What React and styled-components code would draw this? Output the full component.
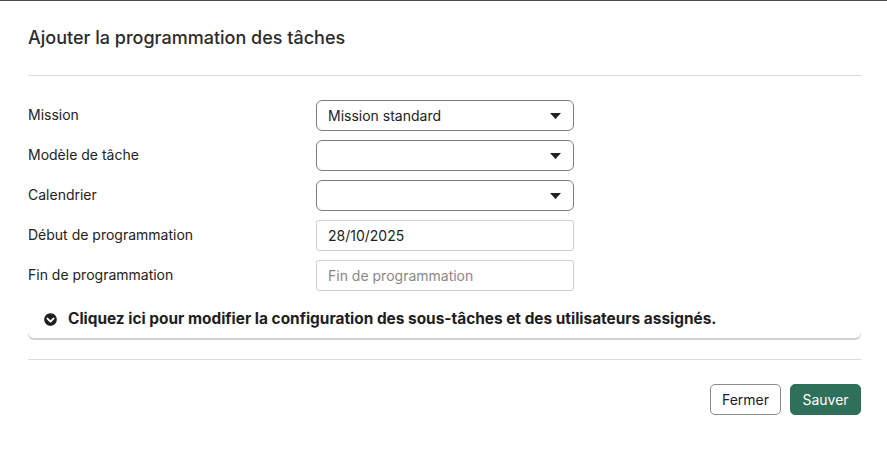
import React from 'react'
import styled, {createGlobalStyle} from 'styled-components'
import {FaChevronCircleDown} from 'react-icons/fa'

const GlobalStyle = createGlobalStyle`
body{
    margin: 0;
    background: #fff;
    font-family: Inter, "Noto Sans", "Liberation Sans", sans-serif;
    color: #222;
}
* { box-sizing: border-box; }
`;

const fields = [
    {label: 'Mission', kind: 'select', value: 'Mission standard'},
    {label: 'Modèle de tâche', kind: 'select', value: ''},
    {label: 'Calendrier', kind: 'select', value: ''},
    {label: 'Début de programmation', kind: 'input', value: '28/10/2025'},
    {label: 'Fin de programmation', kind: 'input', value: '', placeholder: 'Fin de programmation'},
]

const Caret = () => (
    <svg width="11" height="6" viewBox="0 0 11 6">
        <path d="M0 0h11L5.5 6z" fill="#222" />
    </svg>
)

const App = () => {
    return (
        <>
            <GlobalStyle />
            <TopEdge />
            <Modal>
                <Header>
                    <Title>Ajouter la programmation des tâches</Title>
                </Header>
                <Form>
                    {fields.map(f => (
                        <Row key={f.label}>
                            <Label>{f.label}</Label>
                            {f.kind === 'select' ?
                                <Select>
                                    <span>{f.value}</span>
                                    <Caret />
                                </Select>
                                :
                                <Input readOnly value={f.value} placeholder={f.placeholder} />
                            }
                        </Row>
                    ))}
                </Form>
                <Card>
                    <CardToggle>
                        <FaChevronCircleDown size={13} />
                        Cliquez ici pour modifier la configuration des sous-tâches et des utilisateurs assignés.
                    </CardToggle>
                </Card>
                <Footer>
                    <Button>Fermer</Button>
                    <Button primary>Sauver</Button>
                </Footer>
            </Modal>
        </>
    )
}

export default App

const TopEdge = styled.div`
height: 1px;
background: #4a4a4a;
`;

const Modal = styled.div`
padding: 0 26px 0 28px;
`;

const Header = styled.div`
padding-top: 26px;
height: 75px;
border-bottom: 1px solid #dcdcdc;
`;

const Title = styled.h1`
margin: 0;
font-size: 18px;
line-height: 22px;
font-weight: 500;
color: #2b2b2b;
`;

const Form = styled.div`
display: flex;
flex-direction: column;
gap: 9px;
padding-top: 24px;
`;

const Row = styled.div`
display: grid;
grid-template-columns: 288px 258px;
align-items: center;
height: 31px;
`;

const Label = styled.label`
font-size: 14px;
line-height: 17px;
color: #222;
margin-top: -3px;
`;

const Select = styled.div`
height: 31px;
display: flex;
align-items: center;
justify-content: space-between;
padding: 0 12px 0 11px;
border: 1px solid #7d7d7d;
border-radius: 6px;
font-size: 14px;
color: #222;
`;

const Input = styled.input`
height: 31px;
width: 100%;
padding: 0 11px;
border: 1px solid #cfcfcf;
border-radius: 3px;
font-family: inherit;
font-size: 14px;
color: #222;
outline: none;
&::placeholder{
    color: #888;
}
`;

const Card = styled.div`
margin-top: 9px;
border-radius: 6px;
box-shadow: 0 2px 0 0 #d0d0d0;
padding: 9px 16px 9px;
`;

const CardToggle = styled.div`
display: flex;
align-items: center;
gap: 11px;
font-size: 15.4px;
line-height: 20px;
font-weight: 700;
color: #1e1e1e;
cursor: pointer;
`;

const Footer = styled.div`
margin-top: 21px;
border-top: 1px solid #dcdcdc;
padding-top: 24px;
display: flex;
justify-content: flex-end;
gap: 9px;
`;

const Button = styled.button`
height: 31px;
width: 71px;
border-radius: 5px;
font-family: inherit;
font-size: 14px;
cursor: pointer;
border: 1px solid ${({primary}) => primary ? '#2e705a' : '#8a8a8a'};
background: ${({primary}) => primary ? '#2e705a' : '#fff'};
color: ${({primary}) => primary ? '#fff' : '#222'};
`;
